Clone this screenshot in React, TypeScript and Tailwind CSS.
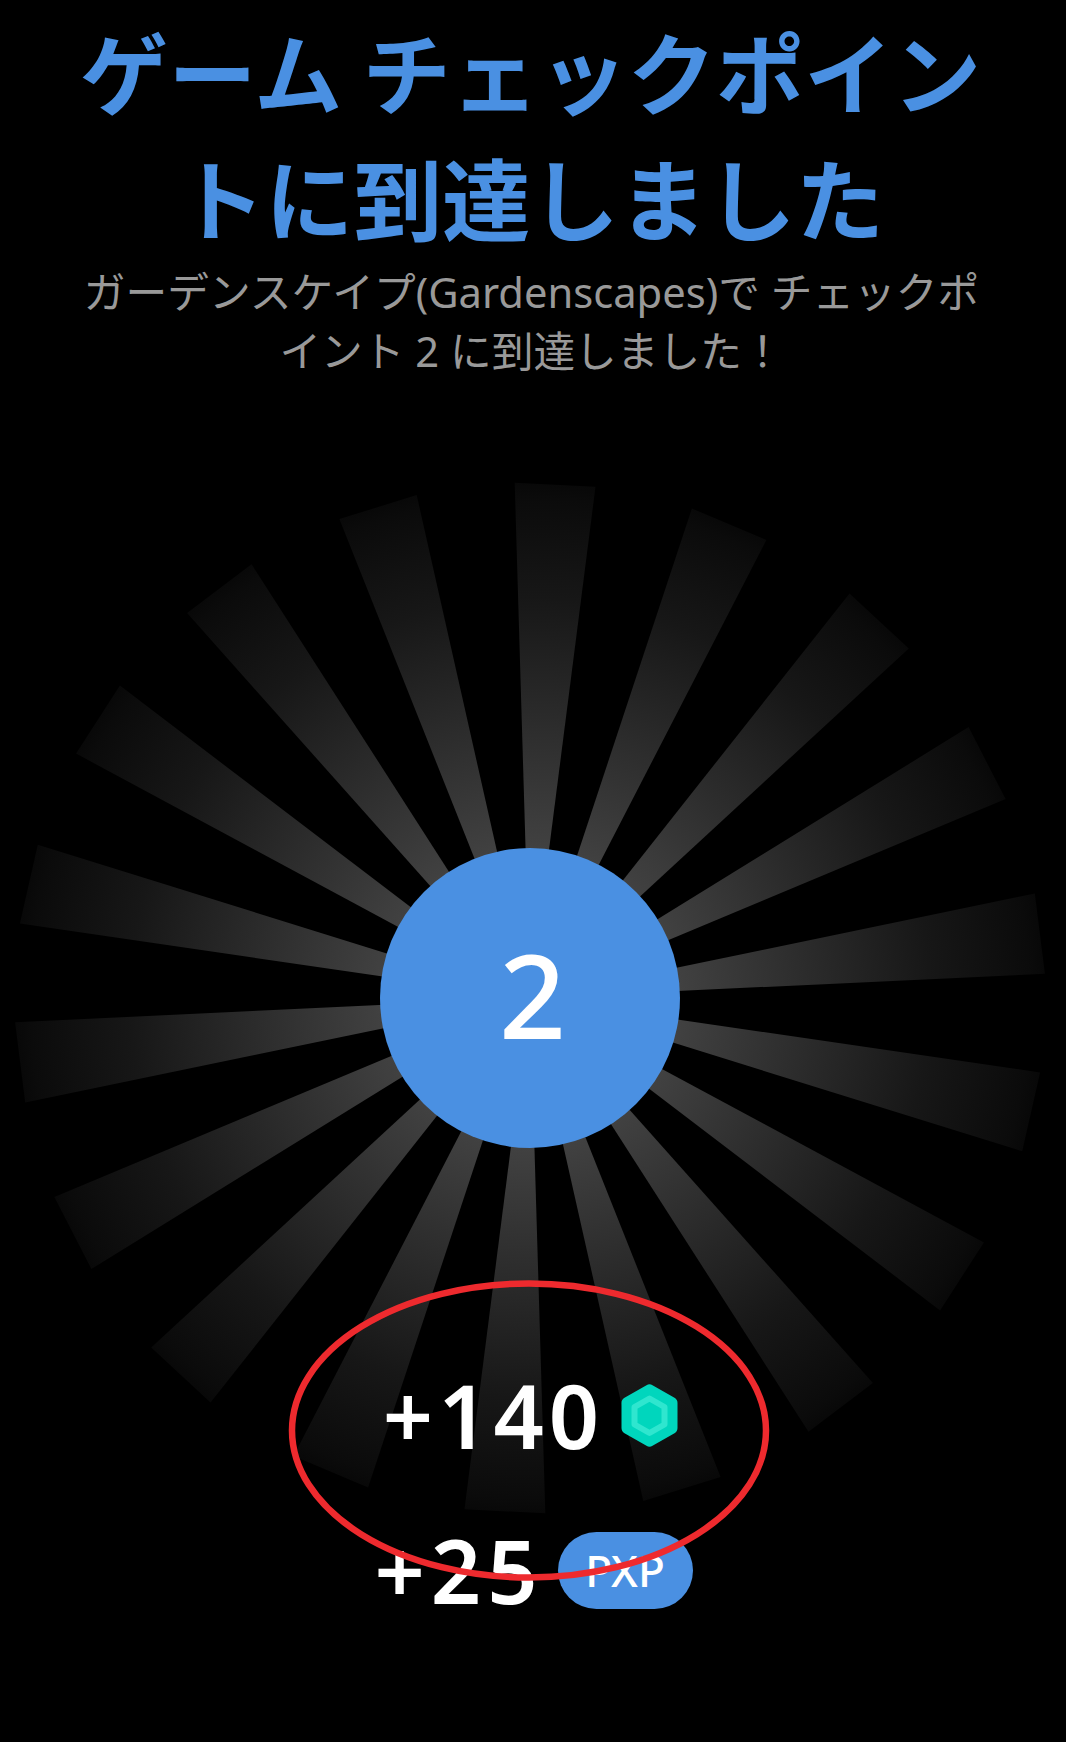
const CX = 530;
const CY = 998;
const R = 515.5;
const HALF = 4.5;
const rays = Array.from({ length: 18 }, (_, i) => {
  const a = ((2.8 + i * 20) * Math.PI) / 180;
  const h = (HALF * Math.PI) / 180;
  const x1 = CX + R * Math.sin(a - h);
  const y1 = CY - R * Math.cos(a - h);
  const x2 = CX + R * Math.sin(a + h);
  const y2 = CY - R * Math.cos(a + h);
  return `${CX},${CY} ${x1.toFixed(1)},${y1.toFixed(1)} ${x2.toFixed(1)},${y2.toFixed(1)}`;
});

function Hexagon() {
  return (
    <svg width="57" height="63" viewBox="0 0 57 63" className="shrink-0" aria-hidden="true">
      <path
        d="M25.5 1.2a6 6 0 0 1 6 0l22 12.6a6 6 0 0 1 3 5.2v25a6 6 0 0 1-3 5.2l-22 12.6a6 6 0 0 1-6 0l-22-12.6a6 6 0 0 1-3-5.2v-25a6 6 0 0 1 3-5.2z"
        fill="#00d6bd"
      />
      <path d="M28.5 14.5l15 8.5v17.5l-15 8.5-15-8.5V23z" fill="none" stroke="#2fe6cf" strokeWidth="6" strokeLinejoin="round" />
    </svg>
  );
}

export default function App() {
  return (
    <div className="relative h-[1742px] w-full overflow-hidden bg-black font-['Noto_Sans','Noto_Sans_CJK_JP',sans-serif]">
      <svg className="absolute left-0 top-0 blur-[0.6px]" width="1066" height="1742" viewBox="0 0 1066 1742" aria-hidden="true">
        <defs>
          <radialGradient id="ray" gradientUnits="userSpaceOnUse" cx={CX} cy={CY} r={R}>
            <stop offset="0.29" stopColor="#414141" />
            <stop offset="0.58" stopColor="#282828" />
            <stop offset="0.776" stopColor="#171717" />
            <stop offset="0.97" stopColor="#0b0b0b" />
            <stop offset="1" stopColor="#080808" />
          </radialGradient>
        </defs>
        {rays.map((points) => (
          <polygon key={points} points={points} fill="url(#ray)" />
        ))}
      </svg>

      <div className="relative flex flex-col items-center pr-[7px] pt-[6px] text-center">
        <h1 className="ml-[2px] font-['Noto_Sans_CJK_JP',sans-serif] text-[88.4px] font-bold leading-[126px] text-[#4a90e2]">
          ゲーム チェックポイン
          <br />
          トに到達しました
        </h1>
        <p className="ml-[4px] mt-[4px] font-['Noto_Sans','Noto_Sans_CJK_JP',sans-serif] text-[41.7px] leading-[59px] text-[#999999]">
          ガーデンスケイプ(Gardenscapes)で チェックポ
          <br />
          イント 2 に到達しました！
        </p>

        <div className="mt-[468px] flex h-[300px] w-[300px] items-center justify-center rounded-full bg-[#4a90e2] pb-[10px] pl-[6px] text-[117px] font-medium leading-none text-white">
          2
        </div>

        <div className="ml-[2px] mt-[207px] flex h-[120px] items-center justify-center gap-[17px] text-[88px] font-semibold leading-none tracking-[5px] text-white">
          <span>+140</span>
          <Hexagon />
        </div>

        <div className="ml-[8px] mt-[35px] flex h-[120px] items-center justify-center gap-[14px] text-[88px] font-semibold leading-none tracking-[6px] text-white">
          <span>+25</span>
          <span className="flex h-[77px] w-[135px] items-center justify-center rounded-full bg-[#4a90e2] text-[44px] font-medium tracking-normal">
            PXP
          </span>
        </div>
      </div>

      <svg className="absolute left-0 top-0" width="1066" height="1742" viewBox="0 0 1066 1742" aria-hidden="true">
        <ellipse cx="529" cy="1430.5" rx="237" ry="147" fill="none" stroke="#ee2a2e" strokeWidth="6.5" />
      </svg>
    </div>
  );
}
